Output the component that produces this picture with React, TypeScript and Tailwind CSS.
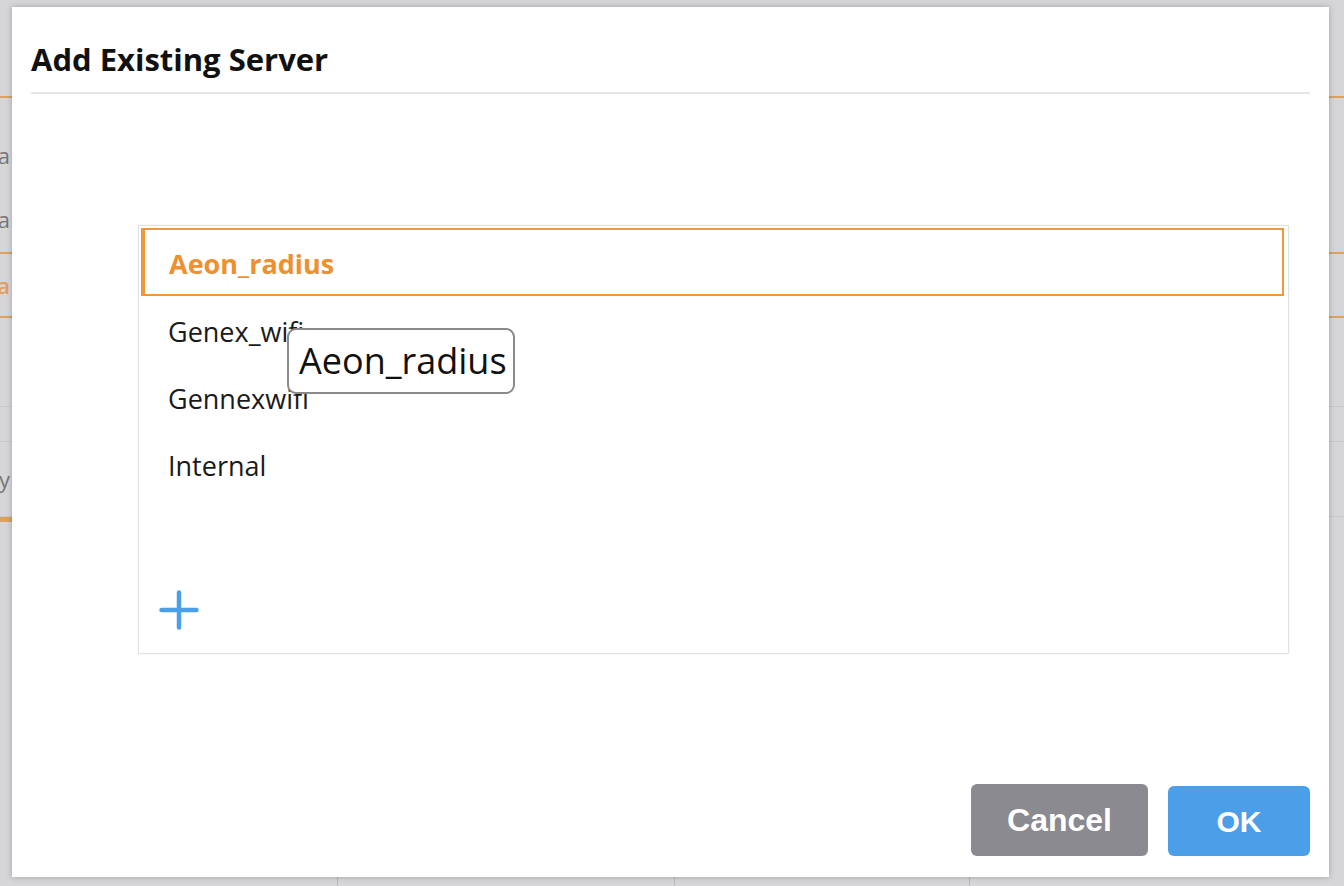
const servers = ["Aeon_radius", "Genex_wifi", "Gennexwifi", "Internal"];

// rows of the page that sits behind the dialog, only their edges show
const backdropRows = [
  { h: 96, left: "", line: "" },
  { h: 2, left: "", line: "bg-[#e0a060]" },
  { h: 40, left: "", line: "" },
  { h: 34, left: "a", line: "" },
  { h: 30, left: "", line: "" },
  { h: 34, left: "a", line: "" },
  { h: 16, left: "", line: "" },
  { h: 2, left: "", line: "bg-[#e0a060]" },
  { h: 62, left: "fa", line: "", orange: true },
  { h: 2, left: "", line: "bg-[#e0a060]" },
  { h: 88, left: "", line: "" },
  { h: 1, left: "", line: "bg-[#c8c8cc]" },
  { h: 34, left: "", line: "" },
  { h: 1, left: "", line: "bg-[#c8c8cc]" },
  { h: 74, left: "ry", line: "" },
  { h: 1, left: "", line: "bg-[#c8c8cc]" },
];

export default function App() {
  return (
    <div className="relative h-[886px] w-[1344px] overflow-hidden bg-[#d6d6d9] font-['Open_Sans',sans-serif]">
      {/* backdrop page */}
      <div className="flex flex-col">
        {backdropRows.map((row, i) => (
          <div key={i} className={`flex w-full ${row.line}`} style={{ height: row.h }}>
            {row.left ? (
              <div
                className={`flex w-[10px] items-center justify-end overflow-hidden text-[22px] ${
                  row.orange ? "font-semibold text-[#e0a060]" : "text-[#777]"
                }`}
              >
                {row.left}
              </div>
            ) : null}
          </div>
        ))}
        <div className="h-[5px] w-[12px] bg-[#e0a060]" />
      </div>
      <div className="absolute bottom-0 left-0 flex h-[9px] w-full">
        <div className="w-[338px] border-r border-[#b9b9bd]" />
        <div className="w-[337px] border-r border-[#b9b9bd]" />
        <div className="w-[295px] border-r border-[#b9b9bd]" />
      </div>

      {/* dialog */}
      <div className="absolute left-[12px] top-[7px] flex h-[870px] w-[1317px] flex-col bg-white shadow-[0_0_6px_rgba(0,0,0,0.25)]">
        <div className="mx-[19px] flex h-[87px] items-end border-b-2 border-[#e6e6e6] pb-[17px]">
          <h1 className="text-[31px] font-bold leading-none text-[#111]">Add Existing Server</h1>
        </div>

        <div className="relative ml-[126px] mt-[131px] flex h-[429px] w-[1151px] flex-col border border-[#e2e2e2] p-[2px] shadow-[0_0_2px_rgba(0,0,0,0.08)]">
          {servers.map((name, index) => (
            <div
              key={name}
              className={`flex h-[67px] shrink-0 items-center pt-[5px] text-[27px] ${
                index === 0
                  ? "mr-[2px] h-[68px] border-2 border-l-4 border-[#f0973c] pl-[24px] font-bold text-[#ee8f30]"
                  : "pl-[27px] text-[#1a1a1a]"
              }`}
            >
              {name}
            </div>
          ))}
          <div className="mt-auto mb-[21px] ml-[18px]">
            <svg width="40" height="40" viewBox="0 0 40 40" fill="none" stroke="#4a9fe8" strokeWidth="4.5" strokeLinecap="round">
              <path d="M20 2.5v35M2.5 20h35" />
            </svg>
          </div>

          {/* tooltip */}
          <div className="absolute left-[148px] top-[102px] flex h-[66px] w-[228px] items-center rounded-[9px] border-2 border-[#8a8a8a] bg-white pl-[10px] text-[36px] leading-none text-[#111]">
            Aeon_radius
          </div>
        </div>

        <div className="mt-auto mb-[21px] mr-[19px] flex justify-end gap-[20px]">
          <button
            type="button"
            className="flex h-[72px] w-[177px] items-center justify-center rounded-[6px] bg-[#8a8a90] font-['Liberation_Sans',sans-serif] text-[32px] font-bold text-white"
          >
            Cancel
          </button>
          <button
            type="button"
            className="mt-[2px] flex h-[70px] w-[142px] items-center justify-center rounded-[6px] bg-[#4a9fe8] font-['Liberation_Sans',sans-serif] text-[30px] font-bold text-white"
          >
            OK
          </button>
        </div>
      </div>
    </div>
  );
}
